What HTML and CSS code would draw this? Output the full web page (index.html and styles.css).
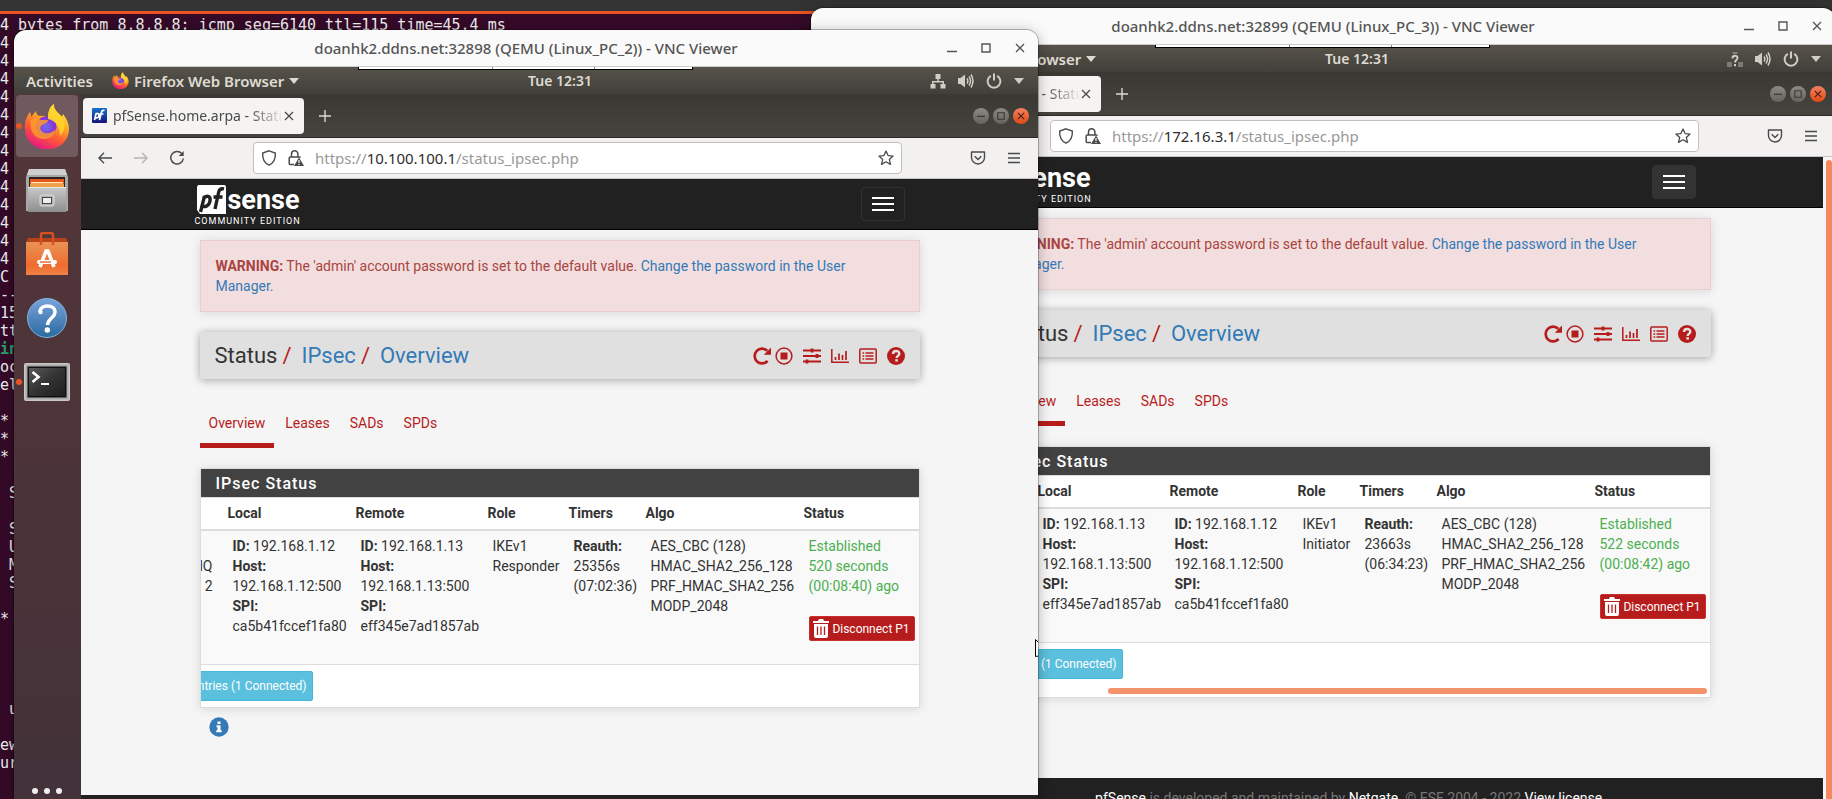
FILE: index.html
```html
<!DOCTYPE html>
<html lang="en">
<head>
<meta charset="utf-8">
<title>VNC Viewer desktop</title>
<link rel="stylesheet" href="styles.css">
</head>
<body>
<svg class="defs" aria-hidden="true">
  <defs>
    <linearGradient id="g-flame" x1="0.8" y1="0" x2="0.3" y2="1"><stop offset="0" stop-color="#fff44f"/><stop offset=".35" stop-color="#ffb321"/><stop offset=".65" stop-color="#ff5a36"/><stop offset="1" stop-color="#e31587"/></linearGradient>
    <radialGradient id="g-globe"><stop offset="0" stop-color="#6e6bf0"/><stop offset="1" stop-color="#8a2bd0"/></radialGradient>
    <linearGradient id="g-steel" x1="0" y1="0" x2="0" y2="1"><stop offset="0" stop-color="#c9c9c9"/><stop offset="1" stop-color="#8e8e8e"/></linearGradient>
    <linearGradient id="g-bag" x1="0" y1="0" x2="0" y2="1"><stop offset="0" stop-color="#e89455"/><stop offset=".7" stop-color="#ef6c2f"/><stop offset="1" stop-color="#f08246"/></linearGradient>
    <linearGradient id="g-help" x1="0" y1="0" x2="0" y2="1"><stop offset="0" stop-color="#7aa3dc"/><stop offset="1" stop-color="#2a699f"/></linearGradient>
    <linearGradient id="g-term" x1="0" y1="0" x2="1" y2="1"><stop offset="0" stop-color="#5a5a5a"/><stop offset=".5" stop-color="#333"/><stop offset="1" stop-color="#1e1e1e"/></linearGradient>
    <linearGradient id="g-pf" x1="0" y1="0" x2="0" y2="1"><stop offset="0" stop-color="#1573c9"/><stop offset="1" stop-color="#16127c"/></linearGradient>
  </defs>
  <symbol id="i-firefox" viewBox="0 0 46 46">
    <path fill="url(#g-flame)" d="M6 9c1 2 1 3 1 5l5-6c0 2 1 4 3 5 4-1 8 1 9 3 0-6 1-12 6-15-1 6 5 9 8 13l1-3c4 5 6 10 6 15A22 20 0 0 1 1 27C0 20 2 14 6 9z"/>
    <circle cx="22" cy="24" r="10.500" fill="url(#g-globe)"/>
    <path fill="#ff9a2a" d="M7 17c3-2 7-2 10 0h7c0 3-4 4-6 5-3 2-2 7 3 8 4 1 8-1 11-4-1 7-7 10-12 10C10 36 5 27 7 17z" opacity=".85"/>
    <path fill="#ffd42f" d="M24 16c0-6 1-12 6-15-1 6 5 9 8 13 4 6 3 14-2 19 0-8-3-15-12-17z" opacity=".9"/>
  </symbol>
  <symbol id="i-files" viewBox="0 0 42 43">
    <path d="M3 0h36l3 8v34H0V8z" fill="#a7a7a7"/><path d="M3 0h36l2 6H1z" fill="#cfcfcf"/>
    <rect x="3" y="8" width="36" height="10" fill="#2b2320"/><rect x="4" y="10" width="34" height="9" fill="#e4571d"/><rect x="5" y="13" width="32" height="1.500" fill="#ffe9a8"/><rect x="4" y="15" width="34" height="3" fill="#eda047"/>
    <path d="M2 18h38v25H2z" fill="url(#g-steel)"/><path d="M2 18h38v1H2z" fill="#e6e6e6"/>
    <rect x="14" y="26" width="14" height="11" rx="2" fill="#b5b5b5" stroke="#ddd"/><rect x="16.500" y="28.500" width="9" height="6" fill="#eee" stroke="#444"/>
  </symbol>
  <symbol id="i-bag" viewBox="0 0 42 44">
    <path d="M2 6h38l2 5H0z" fill="#b8431a"/><path d="M0 10h42v33H0z" fill="url(#g-bag)"/>
    <path d="M15 13V3q0-2 2-2h8q2 0 2 2v10" fill="none" stroke="#d9501f" stroke-width="2.500"/>
    <path d="M14 35l6-16h2l6 16" fill="none" stroke="#fff" stroke-width="3.600"/><path d="M13 30h16" stroke="#fff" stroke-width="4" stroke-linecap="round"/><path d="M14 30h11" stroke="#ee6d33" stroke-width="1.500"/>
  </symbol>
  <symbol id="i-help" viewBox="0 0 42 42">
    <circle cx="21" cy="21" r="19.500" fill="url(#g-help)" stroke="#82b4e4"/>
    <path d="M14 15c0-8 15-8 15 0 0 6-7 6-7.500 13" fill="none" stroke="#fff" stroke-width="3.400"/><circle cx="14.500" cy="15" r="2.200" fill="#fff"/><circle cx="21.300" cy="33" r="2.700" fill="#fff"/>
  </symbol>
  <symbol id="i-term" viewBox="0 0 46 38">
    <rect width="46" height="38" rx="2" fill="#c8c8c8"/><rect x="1.500" y="1.500" width="43" height="35" fill="#aaa"/><rect x="3.500" y="3.500" width="39" height="31" fill="#111"/><rect x="5" y="5" width="36" height="28" fill="url(#g-term)"/>
    <path d="M8.500 9l6 5-6 5" fill="none" stroke="#fff" stroke-width="2.600"/><path d="M17 21h8" stroke="#fff" stroke-width="2"/>
  </symbol>
  <symbol id="i-net" viewBox="0 0 16 16"><path fill="currentColor" d="M5.500 1h5v5H8.700v2H14v3h1.500v4.500h-5V11h2V9.500h-9V11h2v4.500h-5V11H2V8h5.300V6H5.500z"/></symbol>
  <symbol id="i-netq" viewBox="0 0 16 16"><path fill="currentColor" opacity=".4" d="M5.500 1h5v2h-5zM0 11h5v5H0zM11 11h5v5h-5z"/><path d="M5.500 7.500C5.500 4 10.500 4 10.500 7c0 2-2.500 2-2.500 4.500" fill="none" stroke="currentColor" stroke-width="1.900"/><path fill="currentColor" d="M7 13h2v2.300H7z"/></symbol>
  <symbol id="i-vol" viewBox="0 0 16 16"><path fill="currentColor" d="M0 5h2.500L7 1.500v13L2.500 11H0z"/><path d="M9 5.500q1.700 2.500 0 5M11 3.500q3.200 4.500 0 9M13 1.500q4 6.500 0 13" fill="none" stroke="currentColor" stroke-width="1.500"/></symbol>
  <symbol id="i-power" viewBox="0 0 16 16"><path d="M4.800 2.800a6.400 6.400 0 1 0 6.400 0M8 .5v7" fill="none" stroke="currentColor" stroke-width="2"/></symbol>
  <symbol id="i-caret" viewBox="0 0 10 6"><path fill="currentColor" d="M0 0h10L5 6z"/></symbol>
  <symbol id="i-x" viewBox="0 0 10 10"><path d="M1 1l8 8M9 1L1 9" fill="none" stroke="currentColor" stroke-width="1.300"/></symbol>
  <symbol id="i-min" viewBox="0 0 10 10"><path d="M0 8.500h10" stroke="currentColor" stroke-width="1.400"/></symbol>
  <symbol id="i-dash" viewBox="0 0 10 10"><path d="M0 5.500h10" stroke="currentColor" stroke-width="1.400"/></symbol>
  <symbol id="i-max" viewBox="0 0 10 10"><path d="M1 1h8v8H1z" fill="none" stroke="currentColor" stroke-width="1.400"/></symbol>
  <symbol id="i-plus" viewBox="0 0 12 12"><path d="M6 0v12M0 6h12" stroke="currentColor" stroke-width="1.400"/></symbol>
  <symbol id="i-pf" viewBox="0 0 15 15"><rect width="15" height="15" rx="1" fill="url(#g-pf)"/><path d="M2.500 12l1.800-7M4 5.800c4-2 4 5-.6 4M7.500 12l2-8q.4-2 3-1.500M7.500 6h4" fill="none" stroke="#fff" stroke-width="1.700"/></symbol>
  <symbol id="i-back" viewBox="0 0 14 12"><path d="M6 .7L.9 6 6 11.300M.9 6H14" fill="none" stroke="currentColor" stroke-width="1.400"/></symbol>
  <symbol id="i-fwd" viewBox="0 0 14 12"><path d="M8 .7L13.100 6 8 11.300M13.100 6H0" fill="none" stroke="currentColor" stroke-width="1.400"/></symbol>
  <symbol id="i-reload" viewBox="0 0 16 16"><path d="M12.800 3.600A6.300 6.300 0 1 0 14.300 8.500" fill="none" stroke="currentColor" stroke-width="1.500"/><path fill="currentColor" d="M14.700 1v5H9.700z"/></symbol>
  <symbol id="i-shield" viewBox="0 0 16 16"><path d="M8 .8l6.300 2.300c.4 5.400-1 9.600-6.300 12.100C2.700 12.700 1.300 8.500 1.700 3.100z" fill="none" stroke="currentColor" stroke-width="1.400"/></symbol>
  <symbol id="i-lock" viewBox="0 0 16 16"><path d="M3.500 7V4a3.200 3.200 0 0 1 6.400 0v3M6 14.500H2.200q-1 0-1-1V8q0-1 1-1h9q1 0 1 .7" fill="none" stroke="currentColor" stroke-width="1.500"/><path fill="currentColor" d="M11 7.500l5 8.500H6z"/><path d="M11 10v3M11 14v1" stroke="#fff" stroke-width="1.200"/></symbol>
  <symbol id="i-star" viewBox="0 0 16 16"><path d="M8 1l2.100 4.600 5 .5-3.800 3.300 1.200 5L8 11.800l-4.500 2.600 1.200-5L.9 6.100l5-.5z" fill="none" stroke="currentColor" stroke-width="1.300" stroke-linejoin="round"/></symbol>
  <symbol id="i-pocket" viewBox="0 0 16 16"><path d="M1.500 2h13v5.500a6.500 6.500 0 0 1-13 0z" fill="none" stroke="currentColor" stroke-width="1.400" stroke-linejoin="round"/><path d="M4.700 6.200L8 9.400l3.300-3.200" fill="none" stroke="currentColor" stroke-width="1.400"/></symbol>
  <symbol id="i-menu" viewBox="0 0 12 12"><path d="M0 1.500h12M0 6h12M0 10.500h12" stroke="currentColor" stroke-width="1.400"/></symbol>
  <symbol id="i-logo" viewBox="0 0 29 29"><path fill="#fff" d="M1 0h26q2 0 2 2v27H3l-3-4V2z"/><path d="M3.500 27l4-16M6.500 13.500C9 10 14 10.500 13 16c-1 5.500-5.500 6.500-8.500 4.500M18 24l3.700-17q.8-4 5.300-3.200M16.500 12h9" fill="none" stroke="#212121" stroke-width="3.400"/></symbol>
  <symbol id="i-burger" viewBox="0 0 22 14"><path d="M0 1h22M0 7h22M0 13h22" stroke="currentColor" stroke-width="2"/></symbol>
  <symbol id="i-redo" viewBox="0 0 18 18"><path d="M14.600 14A7.400 7.400 0 1 1 14.300 3.800" fill="none" stroke="currentColor" stroke-width="2.700"/><path fill="currentColor" d="M18 .5v7.200h-7.200z"/></symbol>
  <symbol id="i-stop" viewBox="0 0 18 18"><circle cx="9" cy="9" r="7.900" fill="none" stroke="currentColor" stroke-width="1.500"/><path fill="currentColor" d="M5.500 5.500h7v7h-7z"/></symbol>
  <symbol id="i-sliders" viewBox="0 0 18 18"><path d="M0 3.500h18M0 9h18M0 14.500h18" stroke="currentColor" stroke-width="2"/><path d="M9 1.500v4M14 7v4M4 12.500v4" stroke="currentColor" stroke-width="2.800"/></symbol>
  <symbol id="i-chart" viewBox="0 0 18 18"><path d="M.8 2v13.300H18" fill="none" stroke="currentColor" stroke-width="1.500"/><path d="M4.500 10v3M8 6.500V13M11.500 8v5M15 4v9" stroke="currentColor" stroke-width="1.700"/></symbol>
  <symbol id="i-list" viewBox="0 0 18 18"><rect x=".8" y="2" width="16.400" height="14" rx="1" fill="none" stroke="currentColor" stroke-width="1.500"/><path d="M3.500 6h1.700M3.500 9h1.700M3.500 12h1.700M6.500 6h8M6.500 9h8M6.500 12h8" stroke="currentColor" stroke-width="1.700"/></symbol>
  <symbol id="i-quest" viewBox="0 0 18 18"><circle cx="9" cy="9" r="9" fill="currentColor"/><path d="M6 7c0-4 6.300-4 6.300-.3 0 2-2.600 2-2.600 4.300" fill="none" stroke="#e0e0e0" stroke-width="2.400"/><path fill="#e0e0e0" d="M8.300 12.200h2.600v2.400H8.300z"/></symbol>
  <symbol id="i-info" viewBox="0 0 20 20"><circle cx="10" cy="10" r="9.700" fill="#337ab7"/><path fill="#fff" d="M8.500 4.500h3V7h-3zM7.500 8.300h4v5h1.200v1.900H7.300v-1.900h1.200v-3.100h-1z"/></symbol>
  <symbol id="i-trash" viewBox="0 0 16 19"><path fill="#fff" d="M0 2h5l1-2h4l1 2h5v2H0zM1 5h14v12q0 2-2 2H3q-2 0-2-2z"/><path d="M4.500 7.500v8.500M8 7.500v8.500M11.500 7.500v8.500" stroke="#b71c1c" stroke-width="1.300"/></symbol>
</svg>

<div class="desktop">
  <div class="desktop-bar"></div>
  <pre class="terminal">4 bytes from 8.8.8.8: icmp_seq=6140 ttl=115 time=45.4 ms
4
4
4
4
4
4
4
4
4
4
4
4
4
C
--
15
tt
<b class="term-green">in</b>
oc
el

*
*
*

 S

 S
 U
 M
 S

*




 u

ew
ur</pre>

  <section class="vnc vnc-back" aria-label="Linux_PC_3">
    <header class="vnc-title">
      <h1>doanhk2.ddns.net:32899 (QEMU (Linux_PC_3)) - VNC Viewer</h1>
      <div class="vnc-buttons">
        <button aria-label="Minimize"><svg><use href="#i-min"/></svg></button>
        <button aria-label="Maximize"><svg><use href="#i-max"/></svg></button>
        <button aria-label="Close"><svg><use href="#i-x"/></svg></button>
      </div>
    </header>
    <div class="vnc-handle"><i></i><i></i><i></i></div>
    <div class="topbar">
      <div class="topbar-left"><span>Activities</span><svg class="ff-small"><use href="#i-firefox"/></svg><span>Firefox Web Browser</span><svg class="caret"><use href="#i-caret"/></svg></div>
      <span class="clock">Tue 12:31</span>
      <div class="tray"><svg><use href="#i-netq"/></svg><svg><use href="#i-vol"/></svg><svg><use href="#i-power"/></svg><svg class="caret"><use href="#i-caret"/></svg></div>
    </div>
    <div class="screen">
      <nav class="dock"></nav>
      <div class="browser">
        <div class="tabstrip">
          <div class="tab"><svg class="favicon"><use href="#i-pf"/></svg><span class="tab-title">pfSense.home.arpa - Status</span><button class="tab-close" aria-label="Close tab"><svg><use href="#i-x"/></svg></button></div>
          <button class="newtab" aria-label="New tab"><svg><use href="#i-plus"/></svg></button>
          <div class="orbs"><button aria-label="Minimize"><svg><use href="#i-dash"/></svg></button><button aria-label="Maximize"><svg><use href="#i-max"/></svg></button><button class="orb-close" aria-label="Close"><svg><use href="#i-x"/></svg></button></div>
        </div>
        <div class="toolbar">
          <button class="nav-btn" aria-label="Back"><svg class="arrow"><use href="#i-back"/></svg></button>
          <button class="nav-btn dim" aria-label="Forward"><svg class="arrow"><use href="#i-fwd"/></svg></button>
          <button class="nav-btn" aria-label="Reload"><svg><use href="#i-reload"/></svg></button>
          <div class="urlbar"><svg><use href="#i-shield"/></svg><svg><use href="#i-lock"/></svg><div class="url" role="textbox" aria-label="Address">https://<b>172.16.3.1</b>/status_ipsec.php</div><svg><use href="#i-star"/></svg></div>
          <button class="tool-btn" aria-label="Pocket"><svg><use href="#i-pocket"/></svg></button>
          <button class="tool-btn" aria-label="Menu"><svg class="menu"><use href="#i-menu"/></svg></button>
        </div>
        <div class="viewport">
          <div class="page">
            <div class="navbar"><div class="container">
              <a class="brand" href="#"><span class="brand-row"><svg><use href="#i-logo"/></svg><span>sense</span></span><small>COMMUNITY EDITION</small></a>
              <button class="burger active" aria-label="Toggle navigation"><svg><use href="#i-burger"/></svg></button>
            </div></div>
            <main class="container">
              <div class="alert"><strong>WARNING:</strong> The 'admin' account password is set to the default value. <a href="#">Change the password in the User Manager.</a></div>
              <div class="crumbs">
                <ol><li>Status</li><li><a href="#">IPsec</a></li><li><a href="#">Overview</a></li></ol>
                <div class="crumb-icons"><a href="#" aria-label="Restart"><svg><use href="#i-redo"/></svg></a><a href="#" aria-label="Stop"><svg><use href="#i-stop"/></svg></a><a href="#" aria-label="Settings"><svg><use href="#i-sliders"/></svg></a><a href="#" aria-label="Graphs"><svg><use href="#i-chart"/></svg></a><a href="#" aria-label="Logs"><svg><use href="#i-list"/></svg></a><a href="#" aria-label="Help"><svg><use href="#i-quest"/></svg></a></div>
              </div>
              <ul class="pills"><li class="on"><a href="#">Overview</a></li><li><a href="#">Leases</a></li><li><a href="#">SADs</a></li><li><a href="#">SPDs</a></li></ul>
              <section class="panel">
                <h2>IPsec Status</h2>
                <div class="scroller">
                  <table>
                    <colgroup><col class="c-id"><col class="c-wide"><col class="c-narrow"><col class="c-init"><col class="c-time"><col class="c-algo"><col class="c-stat"></colgroup>
                    <thead><tr><th></th><th>Local</th><th>Remote</th><th>Role</th><th>Timers</th><th>Algo</th><th>Status</th></tr></thead>
                    <tbody>
                      <tr><td></td>
                        <td><b>ID:</b> 192.168.1.13<br><b>Host:</b><br>192.168.1.13:500<br><b>SPI:</b><br>eff345e7ad1857ab</td>
                        <td><b>ID:</b> 192.168.1.12<br><b>Host:</b><br>192.168.1.12:500<br><b>SPI:</b><br>ca5b41fccef1fa80</td>
                        <td>IKEv1<br>Initiator</td>
                        <td><b>Reauth:</b><br>23663s<br>(06:34:23)</td>
                        <td>AES_CBC (128)<br>HMAC_SHA2_256_128<br>PRF_HMAC_SHA2_256<br>MODP_2048</td>
                        <td class="ok">Established<br>522 seconds<br>(00:08:42) ago<button class="btn-danger"><svg><use href="#i-trash"/></svg>Disconnect P1</button></td></tr>
                      <tr class="child"><td colspan="7"><button class="btn-info">Show child SA entries (1 Connected)</button></td></tr>
                    </tbody>
                  </table>
                </div>
                <div class="hbar"><i></i></div>
              </section>
              <div class="info"></div>
            </main>
            <footer class="page-footer"><p><a href="#">pfSense</a> is developed and maintained by <a href="#">Netgate.</a> © ESF 2004 - 2022 <a href="#">View license.</a></p></footer>
          </div>
          <div class="vbar"><i></i></div>
        </div>
      </div>
    </div>
  </section>

  <section class="vnc vnc-front" aria-label="Linux_PC_2">
    <header class="vnc-title">
      <h1>doanhk2.ddns.net:32898 (QEMU (Linux_PC_2)) - VNC Viewer</h1>
      <div class="vnc-buttons">
        <button aria-label="Minimize"><svg><use href="#i-min"/></svg></button>
        <button aria-label="Maximize"><svg><use href="#i-max"/></svg></button>
        <button aria-label="Close"><svg><use href="#i-x"/></svg></button>
      </div>
    </header>
    <div class="vnc-handle"><i></i><i></i><i></i></div>
    <div class="topbar">
      <div class="topbar-left"><span>Activities</span><svg class="ff-small"><use href="#i-firefox"/></svg><span>Firefox Web Browser</span><svg class="caret"><use href="#i-caret"/></svg></div>
      <span class="clock">Tue 12:31</span>
      <div class="tray"><svg><use href="#i-net"/></svg><svg><use href="#i-vol"/></svg><svg><use href="#i-power"/></svg><svg class="caret"><use href="#i-caret"/></svg></div>
    </div>
    <div class="screen">
      <nav class="dock" aria-label="Dock">
        <button class="dock-item current running" aria-label="Firefox"><svg class="ic-ff"><use href="#i-firefox"/></svg></button>
        <button class="dock-item" aria-label="Files"><svg class="ic-files"><use href="#i-files"/></svg></button>
        <button class="dock-item" aria-label="Ubuntu Software"><svg class="ic-bag"><use href="#i-bag"/></svg></button>
        <button class="dock-item" aria-label="Help"><svg class="ic-help"><use href="#i-help"/></svg></button>
        <button class="dock-item running" aria-label="Terminal"><svg class="ic-term"><use href="#i-term"/></svg></button>
        <button class="dock-more" aria-label="Show applications"><i></i><i></i><i></i></button>
      </nav>
      <div class="browser">
        <div class="tabstrip">
          <div class="tab"><svg class="favicon"><use href="#i-pf"/></svg><span class="tab-title">pfSense.home.arpa - Status</span><button class="tab-close" aria-label="Close tab"><svg><use href="#i-x"/></svg></button></div>
          <button class="newtab" aria-label="New tab"><svg><use href="#i-plus"/></svg></button>
          <div class="orbs"><button aria-label="Minimize"><svg><use href="#i-dash"/></svg></button><button aria-label="Maximize"><svg><use href="#i-max"/></svg></button><button class="orb-close" aria-label="Close"><svg><use href="#i-x"/></svg></button></div>
        </div>
        <div class="toolbar">
          <button class="nav-btn" aria-label="Back"><svg class="arrow"><use href="#i-back"/></svg></button>
          <button class="nav-btn dim" aria-label="Forward"><svg class="arrow"><use href="#i-fwd"/></svg></button>
          <button class="nav-btn" aria-label="Reload"><svg><use href="#i-reload"/></svg></button>
          <div class="urlbar"><svg><use href="#i-shield"/></svg><svg><use href="#i-lock"/></svg><div class="url" role="textbox" aria-label="Address">https://<b>10.100.100.1</b>/status_ipsec.php</div><svg><use href="#i-star"/></svg></div>
          <button class="tool-btn" aria-label="Pocket"><svg><use href="#i-pocket"/></svg></button>
          <button class="tool-btn" aria-label="Menu"><svg class="menu"><use href="#i-menu"/></svg></button>
        </div>
        <div class="viewport">
          <div class="page">
            <div class="navbar"><div class="container">
              <a class="brand" href="#"><span class="brand-row"><svg><use href="#i-logo"/></svg><span>sense</span></span><small>COMMUNITY EDITION</small></a>
              <button class="burger" aria-label="Toggle navigation"><svg><use href="#i-burger"/></svg></button>
            </div></div>
            <main class="container">
              <div class="alert"><strong>WARNING:</strong> The 'admin' account password is set to the default value. <a href="#">Change the password in the User Manager.</a></div>
              <div class="crumbs">
                <ol><li>Status</li><li><a href="#">IPsec</a></li><li><a href="#">Overview</a></li></ol>
                <div class="crumb-icons"><a href="#" aria-label="Restart"><svg><use href="#i-redo"/></svg></a><a href="#" aria-label="Stop"><svg><use href="#i-stop"/></svg></a><a href="#" aria-label="Settings"><svg><use href="#i-sliders"/></svg></a><a href="#" aria-label="Graphs"><svg><use href="#i-chart"/></svg></a><a href="#" aria-label="Logs"><svg><use href="#i-list"/></svg></a><a href="#" aria-label="Help"><svg><use href="#i-quest"/></svg></a></div>
              </div>
              <ul class="pills"><li class="on"><a href="#">Overview</a></li><li><a href="#">Leases</a></li><li><a href="#">SADs</a></li><li><a href="#">SPDs</a></li></ul>
              <section class="panel">
                <h2>IPsec Status</h2>
                <div class="scroller">
                  <table>
                    <colgroup><col class="c-id"><col class="c-narrow"><col class="c-wide"><col class="c-resp"><col class="c-time"><col class="c-algo"><col class="c-stat"></colgroup>
                    <thead><tr><th></th><th>Local</th><th>Remote</th><th>Role</th><th>Timers</th><th>Algo</th><th>Status</th></tr></thead>
                    <tbody>
                      <tr><td class="ident"><br>HQ<br>2</td>
                        <td><b>ID:</b> 192.168.1.12<br><b>Host:</b><br>192.168.1.12:500<br><b>SPI:</b><br>ca5b41fccef1fa80</td>
                        <td><b>ID:</b> 192.168.1.13<br><b>Host:</b><br>192.168.1.13:500<br><b>SPI:</b><br>eff345e7ad1857ab</td>
                        <td>IKEv1<br>Responder</td>
                        <td><b>Reauth:</b><br>25356s<br>(07:02:36)</td>
                        <td>AES_CBC (128)<br>HMAC_SHA2_256_128<br>PRF_HMAC_SHA2_256<br>MODP_2048</td>
                        <td class="ok">Established<br>520 seconds<br>(00:08:40) ago<button class="btn-danger"><svg><use href="#i-trash"/></svg>Disconnect P1</button></td></tr>
                      <tr class="child"><td colspan="7"><button class="btn-info">Show child SA entries (1 Connected)</button></td></tr>
                    </tbody>
                  </table>
                </div>
              </section>
              <div class="info"><svg><use href="#i-info"/></svg></div>
            </main>
            <footer class="page-footer"></footer>
          </div>
        </div>
      </div>
    </div>
    <svg class="pointer" viewBox="0 0 3 18"><path d="M.5 .5l6 6v10l-6 1z" fill="#fff" stroke="#000"/></svg>
  </section>
</div>
</body>
</html>
```
FILE: styles.css
```css
* { box-sizing: border-box; }
body { margin: 0; overflow: hidden; font-family: Roboto, sans-serif; }
button { padding: 0; border: 0; background: none; color: inherit; font: inherit; display: flex; align-items: center; justify-content: center; }
a { color: #337ab7; text-decoration: none; }
svg { display: block; flex: none; }
.defs { position: absolute; width: 0; height: 0; }

.desktop { position: relative; height: 100vh; overflow: hidden; background: #350a28; }
.desktop-bar { height: 14px; background: #333; border-bottom: 3px solid #e95420; }
.terminal { margin: 0; padding-top: 2px; color: #eee; font: 15px/18px "DejaVu Sans Mono", monospace; }
.term-green { color: #26a269; }

.vnc { position: absolute; bottom: 0; width: 1024px; display: flex; flex-direction: column; border-radius: 12px 12px 0 0; overflow: hidden; font-family: "Noto Sans", sans-serif; box-shadow: 0 0 0 1px rgba(0,0,0,.25), 0 2px 14px rgba(0,0,0,.3); }
.vnc-front { left: 14px; top: 30px; }
.vnc-back { left: 811px; top: 8px; }
.vnc-title { flex: none; height: 37px; display: grid; grid-template-columns: 1fr auto 1fr; align-items: center; background: #fafafa; border-bottom: 1px solid #ccc; color: #555; }
.vnc-title h1 { grid-column: 2; margin: 0; font-size: 15px; line-height: 20px; font-weight: 500; }
.vnc-buttons { display: flex; justify-content: flex-end; gap: 24px; padding-right: 13px; }
.vnc-buttons svg { width: 10px; height: 10px; }
.vnc-handle { position: absolute; left: 344px; top: 37px; width: 335px; height: 3px; display: grid; grid-template-columns: 133px 101px 1fr; gap: 1px; background: #888; border: solid #000; border-width: 0 1px 1px; }
.vnc-handle i { background: #fff; }

.topbar { flex: none; height: 27px; display: flex; align-items: center; background: linear-gradient(#57534a, #403f3a); color: #dfdbd2; font-size: 14px; line-height: 20px; font-weight: 600; }
.topbar-left { width: 514px; padding-left: 12px; display: flex; align-items: center; font-size: 15px; }
.topbar-left span { margin-right: 5px; }
.topbar-left .ff-small { width: 17px; height: 17px; margin: 0 5px 0 14px; }
.caret { width: 10px; height: 6px; }
.tray { margin-left: auto; padding-right: 14px; display: flex; align-items: center; gap: 12px; color: #d0cdc6; }
.tray svg:not(.caret) { width: 16px; height: 16px; }

.screen { flex: 1; min-height: 0; display: flex; }
.dock { flex: none; width: 67px; padding: 1px 3px 4px 2px; display: flex; flex-direction: column; gap: 2px; background: linear-gradient(#53363a, #4b3438 55%, #43323a); }
.dock-item { position: relative; height: 62px; border-radius: 4px; }
.current { background: #705a5d; }
.running::before { content: ""; position: absolute; left: 0; width: 6px; height: 6px; border-radius: 50%; background: #e95420; }
.ic-ff { width: 46px; height: 46px; }
.ic-files { width: 42px; height: 43px; }
.ic-bag { width: 42px; height: 44px; }
.ic-help { width: 42px; height: 42px; }
.ic-term { width: 46px; height: 38px; }
.dock-more { margin-top: auto; gap: 6px; height: 8px; }
.dock-more i { width: 6px; height: 6px; border-radius: 50%; background: #eee; }

.browser { flex: 1; min-width: 0; display: flex; flex-direction: column; }
.tabstrip { flex: none; height: 44px; padding: 0 9px 0 2px; display: flex; align-items: center; background: linear-gradient(#393833, #45443e); border-bottom: 1px solid #2b2a27; }
.tab { width: 221px; height: 36px; padding: 0 10px 0 9px; display: flex; align-items: center; border-radius: 4px; background: #f5f4f2; color: #4a4a4a; font-size: 14px; }
.favicon { width: 15px; height: 15px; margin-right: 6px; }
.tab-title { flex: 1; min-width: 0; overflow: hidden; white-space: nowrap; -webkit-mask-image: linear-gradient(90deg, #000 80%, transparent); mask-image: linear-gradient(90deg, #000 80%, transparent); }
.tab-close svg { width: 10px; height: 10px; }
.newtab { margin-left: 15px; color: #dfdbd2; }
.newtab svg { width: 12px; height: 12px; }
.orbs { margin-left: auto; display: flex; gap: 4px; }
.orbs button { width: 16px; height: 16px; border-radius: 50%; background: linear-gradient(#8b8981, #65635c); color: #3a3935; }
.orbs .orb-close { background: linear-gradient(#f48160, #df4a16); color: #3d1e10; }
.orbs svg { width: 8px; height: 8px; }

.toolbar { flex: none; height: 41px; padding: 0 6px; display: flex; align-items: center; background: #f2f1f0; border-bottom: 1px solid #c6c4c2; color: #4a4a4a; }
.nav-btn, .tool-btn { width: 36px; height: 32px; }
.nav-btn svg, .tool-btn svg { width: 16px; height: 16px; }
.nav-btn .arrow { width: 14px; height: 12px; }
.tool-btn .menu { width: 12px; height: 12px; }
.dim { color: #b5b4b3; }
.urlbar { flex: 1; height: 32px; margin: 0 58px; padding: 0 7px; display: flex; align-items: center; gap: 11px; background: #fff; border: 1px solid #c2c0be; border-radius: 4px; }
.urlbar svg { width: 16px; height: 16px; }
.url { flex: 1; color: #999; font-size: 15px; }
.url b { color: #2e2e2e; font-weight: 400; }

.viewport { flex: 1; min-height: 0; display: flex; overflow: hidden; background: #f5f5f5; }
.page { flex: 1; font: 14px/20px Roboto, sans-serif; color: #333; }
.container { width: 720px; margin: 0 auto; }
.navbar { height: 51px; background: #212121; border-bottom: 1px solid #000; }
.navbar .container { height: 50px; display: flex; align-items: center; justify-content: space-between; padding-right: 15px; }
.brand { margin-left: -5px; padding-top: 5px; display: flex; flex-direction: column; color: #fff; }
.brand-row { display: flex; align-items: center; gap: 2px; padding-left: 2px; height: 29px; font-size: 27px; font-weight: 700; }
.brand-row svg { width: 29px; height: 29px; }
.brand small { font-size: 9px; line-height: 14px; letter-spacing: 1px; }
.burger { width: 44px; height: 34px; border: 1px solid #333; border-radius: 4px; color: #fff; }
.burger.active { background: #333; }
.burger svg { width: 22px; height: 14px; }

.alert { margin-top: 10px; padding: 15px; background: #f2dede; border: 1px solid #ebccd1; color: #a94442; box-shadow: 0 1px 10px rgba(0,0,0,.12); }
.crumbs { margin-top: 20px; height: 47px; padding: 0 15px; display: flex; align-items: center; justify-content: space-between; background: #e0e0e0; border-radius: 3px; box-shadow: 0 1px 8px rgba(0,0,0,.35); }
.crumbs ol { margin: 0; padding: 0; list-style: none; display: flex; font-size: 22px; }
.crumbs li + li::before { content: "/"; color: #b71c1c; padding: 0 10px 0 5px; }
.crumb-icons { display: flex; gap: 10px; }
.crumb-icons a { color: #b71c1c; }
.crumb-icons a:first-child { margin-right: -6px; }
.crumb-icons svg { width: 18px; height: 18px; }
.pills { margin: 24px 0 20px; padding: 0; list-style: none; display: flex; gap: 2px; }
.pills a { display: block; padding: 10px 9px; color: #b71c1c; border-bottom: 5px solid transparent; }
.pills .on a { border-bottom-color: #b71c1c; }

.panel { background: #fff; border: 1px solid #ddd; box-shadow: 0 1px 10px rgba(0,0,0,.12); }
.panel h2 { margin: 0; padding: 5px 15px 3px; background: #424242; border-bottom: 1px solid #ddd; color: #fff; font-size: 16px; line-height: 20px; font-weight: 500; letter-spacing: 1px; }
.scroller { display: flex; justify-content: flex-end; overflow: hidden; }
table { flex: none; table-layout: fixed; border-collapse: collapse; width: 0; }
.c-id { width: 150px; }
.c-narrow { width: 128px; }
.c-wide { width: 132px; }
.c-resp { width: 81px; }
.c-init { width: 62px; }
.c-time { width: 77px; }
.c-algo { width: 158px; }
.c-stat { width: 120px; }
th { padding: 4px 5px 6px; text-align: left; font-weight: 700; border-bottom: 2px solid #ddd; }
thead th { height: 32px; }
td { padding: 5px 0 23px 10px; vertical-align: top; white-space: nowrap; background: #f9f9f9; }
.ident { padding-right: 10px; text-align: right; }
.ok { color: #4caf50; }
.btn-danger { width: 106px; height: 25px; margin-top: 20px; gap: 3px; border: 1px solid #c9302c; border-radius: 2px; background: #b71c1c; color: #fff; font-size: 12px; }
.btn-danger svg { width: 16px; height: 19px; }
.child td { padding: 6px 5px; background: #fff; border-top: 1px solid #ddd; }
.btn-info { width: 235px; height: 30px; padding-right: 5px; justify-content: flex-end; background: #5bc0de; border: 1px solid #46b8da; border-radius: 2px; color: #fff; font-size: 12px; }
.hbar { height: 12px; padding: 3px; display: flex; justify-content: flex-end; }
.hbar i { width: 84%; height: 6px; border-radius: 3px; background: #f4926a; }
.info { height: 48px; padding: 9px; }
.info svg { width: 20px; height: 20px; }
.page-footer { margin-top: 39px; height: 80px; padding-top: 10px; background: #212121; color: #777; text-align: center; }
.page-footer p { margin: 0; }
.page-footer a { color: #fff; }
.vnc-back .page-footer { margin-top: 32px; }
.vbar { flex: none; width: 12px; padding: 3px; }
.vbar i { display: block; height: 800px; border-radius: 3px; background: #f4895f; }
.pointer { position: absolute; right: 0; top: 609px; width: 3px; height: 18px; }
```
